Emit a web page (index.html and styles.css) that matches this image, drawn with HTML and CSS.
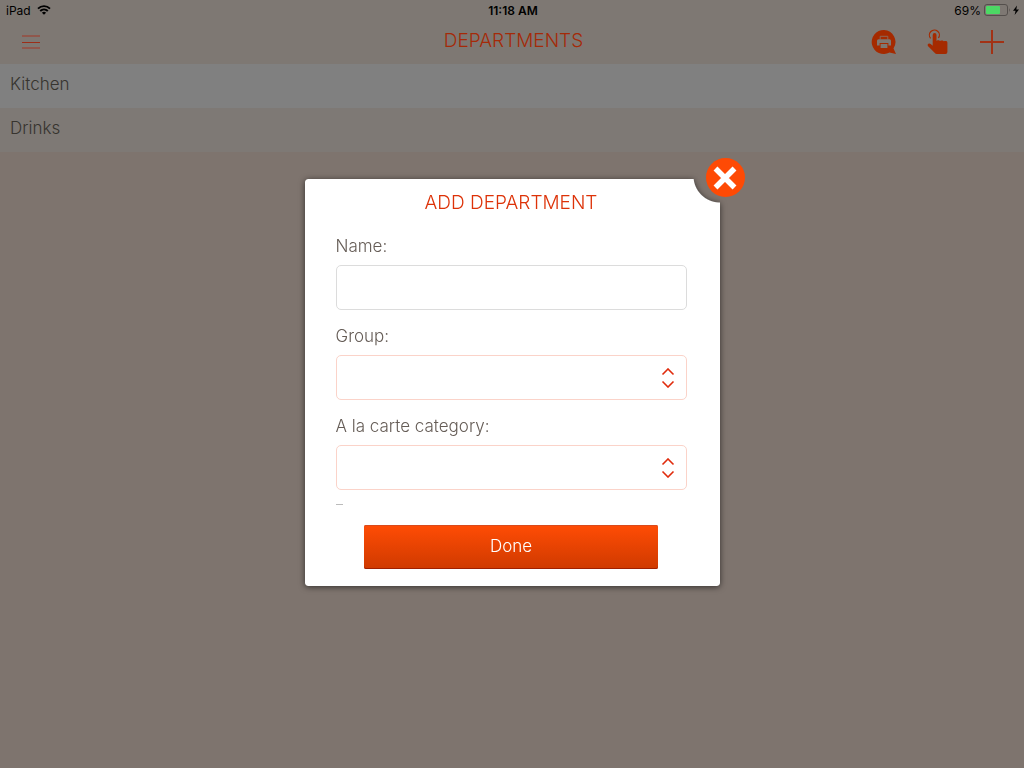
FILE: index.html
```html
<!DOCTYPE html>
<html lang="en">

<head>
    <meta charset="UTF-8">
    <meta name="viewport" content="width=device-width, initial-scale=1.0">
    <title>Departments</title>
    <link rel="stylesheet" href="styles.css">
</head>

<body>
    <header class="topbar">
        <div class="status">
            <div class="status-left">
                <span>iPad</span>
                <svg width="14" height="10" viewBox="0 0 14 10">
                    <path d="M1 3.6a8.6 8.6 0 0 1 12 0M3.2 6a5.5 5.5 0 0 1 7.6 0" fill="none" stroke="#000" stroke-width="1.9"/>
                    <path d="M4.9 7.7a3 3 0 0 1 4.2 0L7 9.8z"/>
                </svg>
            </div>
            <div class="status-time">11:18 AM</div>
            <div class="status-right">
                <span>69%</span>
                <svg width="36" height="12" viewBox="0 0 36 12">
                    <rect x=".5" y=".5" width="23" height="11" rx="2.5" fill="none" stroke="#544f4c"/>
                    <rect x="2" y="2" width="14" height="8" rx="1" fill="#4cd964"/>
                    <path d="M25 4q1.6 2 0 4z" fill="#544f4c"/>
                    <path d="M33 1.5 29 6.8h2.6L30.6 11l4.4-5.6h-2.7z"/>
                </svg>
            </div>
        </div>
        <div class="navbar">
            <button class="icon-button" type="button" aria-label="Menu">
                <svg width="18" height="14" viewBox="0 0 18 14">
                    <path d="M0 1h18M0 13h18" stroke="#964c40" stroke-width="2" opacity=".75"/>
                    <path d="M0 7.5h18" stroke="#9c2e18"/>
                </svg>
            </button>
            <h1 class="title">DEPARTMENTS</h1>
            <div class="actions">
                <button class="icon-button" type="button" aria-label="Print">
                    <svg width="26" height="26" viewBox="0 0 26 26">
                        <path d="M13 1a12 12 0 1 0 5.5 22.5L25 25l-2.5-5.5A12 12 0 0 0 13 1z" fill="#a52a00"/>
                        <path d="M9.2 10.5V7.3h7.6v3.2" fill="none" stroke="#8c6858" stroke-width="1"/>
                        <path d="M7.5 10.2h11q1.5 0 1.5 1.5v4.800h-2.600V14H8.600v2.500H6v-4.800q0-1.500 1.500-1.500z" fill="#7e7873"/>
                        <path d="M9.6 15h6.8v4H9.6z" fill="#7e7873"/>
                    </svg>
                </button>
                <button class="icon-button" type="button" aria-label="Select">
                    <svg width="26" height="26" viewBox="0 0 26 26">
                        <path d="M5.6 9.3a5 5 0 1 1 7.8-.3" fill="none" stroke="#a52a00" stroke-width="1.2"/>
                        <path d="M7.7 6q0-2 1.9-2t1.900 2v6l1-.7H14l1 .8 1-.6h1.700l1 .8 1-.3h1.500q1.200.3 1.200 1.600V23q0 2-2 2H12q-1.500 0-2.400-1.200L2.900 17q-.8-1.300.4-2.200 1.300-.8 2.400.2l2 1.700z" fill="#a52a00"/>
                    </svg>
                </button>
                <button class="icon-button" type="button" aria-label="Add department">
                    <svg width="26" height="26" viewBox="0 0 26 26">
                        <path d="M1 13h24M13 1v24" stroke="#a23215" stroke-width="2"/>
                    </svg>
                </button>
            </div>
        </div>
    </header>

    <ul class="departments">
        <li>Kitchen</li>
        <li>Drinks</li>
    </ul>

    <div class="overlay">
        <div class="modal" role="dialog" aria-labelledby="modalTitle">
            <div class="modal-shadow">
                <form class="modal-form">
                    <h2 class="title" id="modalTitle">ADD DEPARTMENT</h2>
                    <div class="fields">
                        <label for="nameInput">Name:</label>
                        <input class="field" type="text" id="nameInput" name="name">

                        <label for="groupSelect">Group:</label>
                        <div class="select-box">
                            <select class="field" id="groupSelect" name="group">
                                <option value=""></option>
                            </select>
                            <svg class="arrows" width="14" height="20" viewBox="0 0 14 20">
                                <path d="M1.5 6.5 7 1l5.5 5.5M1.5 13.5 7 19l5.5-5.5"/>
                            </svg>
                        </div>

                        <label for="categorySelect">A la carte category:</label>
                        <div class="select-box">
                            <select class="field" id="categorySelect" name="category">
                                <option value=""></option>
                            </select>
                            <svg class="arrows" width="14" height="20" viewBox="0 0 14 20">
                                <path d="M1.5 6.5 7 1l5.5 5.5M1.5 13.5 7 19l5.5-5.5"/>
                            </svg>
                        </div>
                        <hr class="dash">
                    </div>
                    <button class="done" type="submit">Done</button>
                </form>
            </div>
            <button class="close" type="button" aria-label="Close">
                <svg width="24" height="24" viewBox="0 0 24 24">
                    <path d="M2.5 2.5l19 19M21.5 2.5l-19 19" stroke="#fff" stroke-width="5.5"/>
                </svg>
            </button>
        </div>
    </div>
</body>

</html>
```
FILE: styles.css
```css
* {
    box-sizing: border-box;
}

body {
    margin: 0;
    min-height: 100vh;
    background-color: #7e746e;
    color: #37342f;
    font-family: Inter, "Open Sans", sans-serif;
    font-weight: 300;
    font-size: 17px;
}

button {
    padding: 0;
    border: none;
    background: none;
    font: inherit;
    cursor: pointer;
}

svg {
    display: block;
}

.topbar {
    height: 64px;
    background-color: #7e7873;
}

.status {
    display: grid;
    grid-template-columns: 1fr auto 1fr;
    align-items: center;
    height: 20px;
    padding: 0 4px 0 6px;
    color: #000;
    font-size: 12px;
    font-weight: 400;
}

.status-left,
.status-right {
    display: flex;
    align-items: center;
    gap: 6px;
}

.status-right {
    justify-content: flex-end;
    gap: 3px;
}

.status-time {
    font-weight: 600;
}

.navbar {
    display: grid;
    grid-template-columns: 1fr auto 1fr;
    align-items: center;
    height: 44px;
    padding: 0 19px 0 22px;
}

.icon-button {
    justify-self: start;
}

.title {
    margin: 0;
    font-size: 19px;
    font-weight: 300;
    line-height: 24px;
    text-align: center;
}

.navbar .title {
    padding-bottom: 2px;
    color: #a52a08;
}

.actions {
    display: flex;
    justify-content: flex-end;
    gap: 28px;
}

.departments {
    margin: 0;
    padding: 0;
    list-style: none;
}

.departments li {
    height: 44px;
    padding: 0 10px;
    background-color: #7e7975;
    line-height: 41px;
}

.departments li:first-child {
    background-color: #808080;
}

.overlay {
    position: fixed;
    inset: 0;
    display: flex;
    align-items: center;
    justify-content: center;
    padding-bottom: 3px;
}

.modal {
    position: relative;
    width: 415px;
    max-width: 90%;
}

.modal-shadow {
    filter: drop-shadow(0 1px 3px rgba(0, 0, 0, 0.6));
}

/* the corner is cut out around the close button */
.modal-form {
    padding: 12px 33px 17px 31px;
    border-radius: 3px;
    background-color: #fff;
    -webkit-mask-image: radial-gradient(circle at 100% -3px, transparent 26px, #000 27px);
    mask-image: radial-gradient(circle at 100% -3px, transparent 26px, #000 27px);
}

.modal .title {
    color: #dd3208;
}

.fields {
    padding-top: 16px;
}

label {
    display: block;
    height: 34px;
    color: #655c56;
    line-height: 30px;
}

.field {
    display: block;
    width: 100%;
    height: 45px;
    padding: 0 12px;
    border: 1px solid #dcdcdc;
    border-radius: 5px;
    background-color: #fff;
    font: inherit;
}

input.field {
    margin-bottom: 11px;
}

.select-box {
    position: relative;
    margin-bottom: 11px;
}

select.field {
    border-color: #fbd3c9;
    appearance: none;
}

.arrows {
    position: absolute;
    top: 13px;
    right: 12px;
    fill: none;
    stroke: #e02b0c;
    stroke-width: 1.6;
    pointer-events: none;
}

.dash {
    width: 7px;
    margin: 14px 0 20px;
    border: none;
    border-top: 1px solid #bbb;
}

.done {
    display: block;
    width: 294px;
    max-width: 100%;
    height: 44px;
    margin: 0 auto;
    padding-bottom: 2px;
    border-radius: 2px;
    background: linear-gradient(#ff4c05, #cf3a00);
    box-shadow: inset 0 -1px 0 #a02000, inset 0 1px 0 #d94a1c;
    color: #fff;
}

.close {
    position: absolute;
    top: -21px;
    right: -25px;
    display: flex;
    align-items: center;
    justify-content: center;
    width: 39px;
    height: 39px;
    border-radius: 50%;
    background-color: #fe4a05;
}
```
